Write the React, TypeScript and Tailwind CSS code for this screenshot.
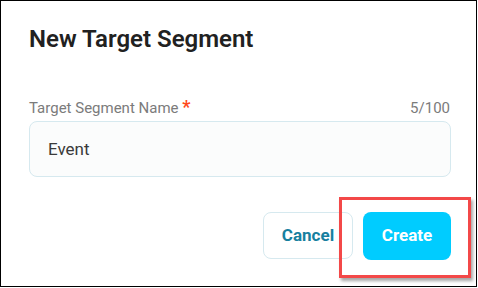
import React, { useState } from 'react';

export default function App() {
  const [name, setName] = useState('Event');

  return (
    <div className="relative w-[478px] h-[288px] bg-white font-['Roboto',sans-serif]">
      <div className="w-[477px] h-[287px] border border-black bg-white pl-[28px] pr-[25px] pt-[22px] flex flex-col">
        <h2 className="text-[24px] leading-[32px] font-semibold text-[#212121]">New Target Segment</h2>

        <div className="mt-[43px] flex justify-between items-center h-[20px] text-[15px] leading-[20px]">
          <label className="text-[#7b7b7b]">
            Target Segment Name <span className="text-[#ff4a1c] text-[18px] leading-none font-bold">*</span>
          </label>
          <span className="text-[#7b7b7b] pr-[1px]">{name.length}/100</span>
        </div>

        <input
          type="text"
          value={name}
          onChange={(e) => setName(e.target.value)}
          className="mt-[3px] h-[56px] w-full rounded-[8px] border border-[#d6e9ef] bg-[#fbfcfc] px-[18px] text-[17px] text-[#3a3a3a] outline-none"
        />

        <div className="mt-[35px] flex justify-end gap-[10px]">
          <button className="h-[47px] w-[90px] rounded-[8px] border border-[#d6e9ef] bg-white text-[17px] font-bold text-[#17809f]">
            Cancel
          </button>
          <button className="h-[48px] w-[88px] rounded-[8px] bg-[#00ccff] text-[17px] font-bold text-white">
            Create
          </button>
        </div>
      </div>

      {/* annotation highlight round the Create button */}
      <div className="absolute left-[339px] top-[197px] w-[132px] h-[81px] border-[3px] border-[#f34848] shadow-[2px_3px_3px_rgba(0,0,0,0.35)] pointer-events-none" />
    </div>
  );
}
